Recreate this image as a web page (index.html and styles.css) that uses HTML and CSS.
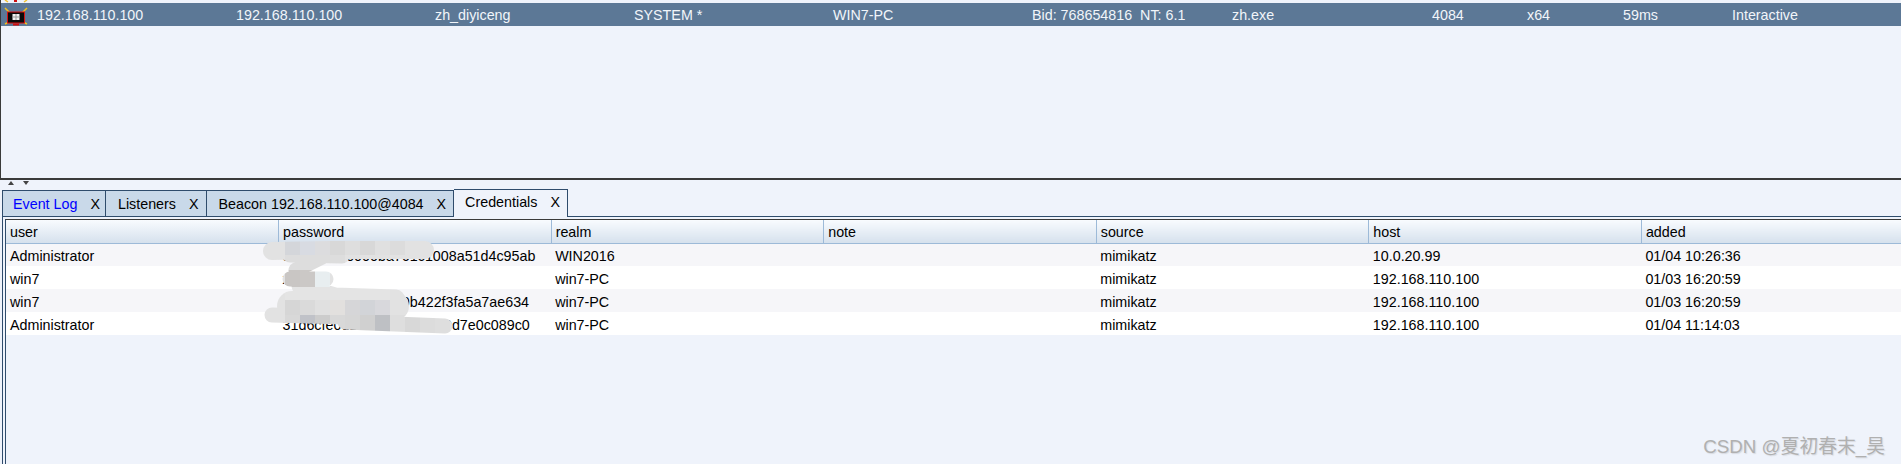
FILE: index.html
```html
<!DOCTYPE html>
<html lang="en">
<head>
    <meta charset="UTF-8">
    <title>Cobalt Strike</title>
    <link rel="stylesheet" href="styles.css">
</head>
<body>
    <div class="app">
        <div class="sessions">
            <div class="session-row">
                <svg class="session-icon" viewBox="0 0 24 27" width="24" height="27">
                    <path d="M1 0l3 2M23 0l-3 2" stroke="#f2c230" stroke-width="1.5"/>
                    <rect x="10" y="0" width="3" height="2" fill="#d01010"/>
                    <path d="M1 8l5 5M23 8l-5 5M1 24l4-2M23 24l-4-2" stroke="#f0c020" stroke-width="1.5"/>
                    <rect x="3.5" y="12" width="17" height="11" fill="#0a0a0a" stroke="#d81010" stroke-width="1"/>
                    <rect x="8.5" y="14" width="7" height="6" fill="#f2f2f2"/>
                    <path d="M12 14v6M8.5 17h7" stroke="#999" stroke-width="1"/>
                    <rect x="9" y="23.5" width="6" height="2" fill="#d01010"/>
                </svg>
                <span></span>
                <span>192.168.110.100</span>
                <span>192.168.110.100</span>
                <span>zh_diyiceng</span>
                <span>SYSTEM *</span>
                <span>WIN7-PC</span>
                <span>Bid: 768654816  NT: 6.1</span>
                <span>zh.exe</span>
                <span>4084</span>
                <span>x64</span>
                <span>59ms</span>
                <span>Interactive</span>
            </div>
        </div>

        <div class="splitter">
            <div class="split-arrows">
                <span class="arrow-up"></span>
                <span class="arrow-down"></span>
            </div>
            <div class="split-grip"></div>
        </div>

        <div class="tabs">
            <div class="tab tab-event">Event Log<span class="tab-close">X</span></div>
            <div class="tab">Listeners<span class="tab-close">X</span></div>
            <div class="tab">Beacon 192.168.110.100@4084<span class="tab-close">X</span></div>
            <div class="tab tab-active">Credentials<span class="tab-close">X</span></div>
        </div>

        <div class="tab-panel">
            <div class="table-wrap">
                <table class="cred-table">
                    <thead>
                        <tr>
                            <th>user</th>
                            <th>password</th>
                            <th>realm</th>
                            <th>note</th>
                            <th>source</th>
                            <th>host</th>
                            <th>added</th>
                        </tr>
                    </thead>
                    <tbody>
                        <tr>
                            <td>Administrator</td>
                            <td>300000000000ba761c1008a51d4c95ab</td>
                            <td>WIN2016</td>
                            <td></td>
                            <td>mimikatz</td>
                            <td>10.0.20.99</td>
                            <td>01/04 10:26:36</td>
                        </tr>
                        <tr>
                            <td>win7</td>
                            <td>xxxxx</td>
                            <td>win7-PC</td>
                            <td></td>
                            <td>mimikatz</td>
                            <td>192.168.110.100</td>
                            <td>01/03 16:20:59</td>
                        </tr>
                        <tr>
                            <td>win7</td>
                            <td>0000000000000000b422f3fa5a7ae634</td>
                            <td>win7-PC</td>
                            <td></td>
                            <td>mimikatz</td>
                            <td>192.168.110.100</td>
                            <td>01/03 16:20:59</td>
                        </tr>
                        <tr>
                            <td>Administrator</td>
                            <td>31d6cfe0d16ae931b73c59d7e0c089c0</td>
                            <td>win7-PC</td>
                            <td></td>
                            <td>mimikatz</td>
                            <td>192.168.110.100</td>
                            <td>01/04 11:14:03</td>
                        </tr>
                    </tbody>
                </table>
            </div>
        </div>

        <!-- smudge over the password column -->
        <svg class="smudge" width="460" height="340" viewBox="0 0 460 340">
            <defs>
                <mask id="smudge-mask" maskUnits="userSpaceOnUse" x="0" y="0" width="460" height="340">
                    <g fill="none" stroke="#fff" stroke-linecap="round" stroke-linejoin="round">
                        <path d="M272 251L330 250L425 250" stroke-width="18"/>
                        <path d="M290 255L342 256" stroke-width="15"/>
                        <path d="M322 257L296 270L306 279" stroke-width="15"/>
                        <path d="M290 279L326 279" stroke-width="15"/>
                        <path d="M300 286L335 296L396 298" stroke-width="17"/>
                        <path d="M292 306L394 306" stroke-width="30"/>
                        <path d="M272 315L345 317" stroke-width="15"/>
                        <path d="M345 322L445 326" stroke-width="15"/>
                    </g>
                </mask>
            </defs>
            <g mask="url(#smudge-mask)">
                <rect x="260" y="235" width="200" height="105" fill="#e2e2e2"/>
                <rect x="285" y="240" width="15" height="15" fill="#d4d6da"/>
                <rect x="300" y="240" width="15" height="15" fill="#d8dbe2"/>
                <rect x="315" y="240" width="15" height="15" fill="#dcdcde"/>
                <rect x="330" y="240" width="15" height="15" fill="#d8d8d8"/>
                <rect x="345" y="240" width="15" height="15" fill="#dedede"/>
                <rect x="360" y="240" width="15" height="15" fill="#d8d8d8"/>
                <rect x="375" y="240" width="15" height="15" fill="#e0e0e0"/>
                <rect x="390" y="240" width="15" height="15" fill="#dcdcdc"/>
                <rect x="405" y="240" width="30" height="15" fill="#e2e2e2"/>
                <rect x="285" y="255" width="60" height="15" fill="#dddddd"/>
                <rect x="285" y="270" width="15" height="17" fill="#c9c6c4"/>
                <rect x="300" y="270" width="15" height="17" fill="#cbc8c6"/>
                <rect x="315" y="270" width="15" height="17" fill="#e8eef0"/>
                <rect x="285" y="287" width="105" height="13" fill="#e4e4e4"/>
                <rect x="285" y="300" width="15" height="15" fill="#d6d6d6"/>
                <rect x="300" y="300" width="15" height="15" fill="#dadada"/>
                <rect x="315" y="300" width="15" height="15" fill="#e0e0e0"/>
                <rect x="330" y="300" width="15" height="15" fill="#e2e0de"/>
                <rect x="345" y="300" width="15" height="15" fill="#d6d6d8"/>
                <rect x="360" y="300" width="15" height="15" fill="#d2d4d8"/>
                <rect x="375" y="300" width="15" height="15" fill="#d8d8dc"/>
                <rect x="285" y="315" width="15" height="20" fill="#d8d8d8"/>
                <rect x="300" y="315" width="15" height="20" fill="#c0c2c8"/>
                <rect x="315" y="315" width="15" height="20" fill="#cccccc"/>
                <rect x="330" y="315" width="15" height="20" fill="#d8d8d8"/>
                <rect x="345" y="315" width="15" height="20" fill="#d6d6d6"/>
                <rect x="360" y="315" width="15" height="20" fill="#d0d0d0"/>
                <rect x="375" y="315" width="15" height="20" fill="#bec0c4"/>
                <rect x="390" y="315" width="15" height="20" fill="#dedede"/>
                <rect x="405" y="315" width="15" height="20" fill="#d8d8d8"/>
                <rect x="420" y="315" width="15" height="20" fill="#dcdcdc"/>
                <rect x="435" y="315" width="15" height="20" fill="#dedede"/>
            </g>
        </svg>

        <div class="watermark">CSDN @夏初春末_昊</div>
    </div>
</body>
</html>
```

FILE: styles.css
```css
:root {
    --bg-color: #eff3fb;
    --dark-line: #3a3a3a;
    --blue-line: #2f4c6c;
    --head-line: #9dbad8;
    --selected: #5c7896;
    --tab-color: #c9d9e9;
}

* {
    box-sizing: border-box;
}

html, body {
    margin: 0;
    padding: 0;
    height: 100%;
    overflow: hidden;
}

body {
    font-family: "Liberation Sans", Arial, sans-serif;
    font-size: 14.3px;
    background-color: var(--bg-color);
    color: #000;
}

.app {
    position: relative;
    height: 464px;
    display: flex;
    flex-direction: column;
}

/* top session table */
.sessions {
    height: 180px;
    padding-top: 3px;
    border-left: 1px solid var(--dark-line);
    border-bottom: 2px solid var(--dark-line);
}

.session-row {
    position: relative;
    height: 23px;
    display: grid;
    grid-template-columns: 36px 199px 199px 199px 199px 199px 200px 200px 95px 96px 109px 1fr;
    align-items: center;
    background-color: var(--selected);
    color: #f1f5fa;
    white-space: pre;
}

.session-icon {
    position: absolute;
    left: 3px;
    top: -3px;
}

/* splitter between the two panes */
.splitter {
    position: relative;
    height: 9px;
    flex-shrink: 0;
}

.split-arrows {
    display: flex;
    gap: 9px;
    padding: 1px 0 0 8px;
}

.arrow-up, .arrow-down {
    width: 0;
    height: 0;
    border-left: 3.5px solid transparent;
    border-right: 3.5px solid transparent;
}

.arrow-up {
    border-bottom: 4px solid #444;
}

.arrow-down {
    border-top: 4px solid #444;
}

.split-grip {
    position: absolute;
    left: 951px;
    top: 1px;
    width: 20px;
    height: 4px;
    background-image: radial-gradient(#7a8a9c 0.8px, transparent 1px);
    background-size: 4px 2px;
}

/* tab strip */
.tabs {
    display: flex;
    align-items: flex-end;
    height: 27px;
    padding-left: 2px;
    flex-shrink: 0;
}

.tab {
    height: 26px;
    display: flex;
    align-items: center;
    padding: 0 7px 0 12px;
    background-color: var(--tab-color);
    border: 1px solid var(--blue-line);
    border-bottom: none;
    border-left-width: 0;
    white-space: nowrap;
}

.tab-event {
    color: #0000ff;
    padding: 0 5px 0 10px;
    border-left-width: 1px;
}

.tab-active {
    position: relative;
    z-index: 1;
    height: 28px;
    margin-bottom: -1px;
    padding: 0 7px 3px 11px;
    background-color: var(--bg-color);
    color: #000;
}

.tab-close {
    margin-left: 13px;
    color: #000;
}

/* credentials table */
.tab-panel {
    flex: 1;
    margin-left: 2px;
    padding: 2px 0 0 2px;
    border-top: 1px solid var(--blue-line);
    border-left: 1px solid var(--blue-line);
    min-height: 0;
}

.table-wrap {
    height: 100%;
    overflow: hidden;
    border-top: 1px solid var(--dark-line);
    border-left: 1px solid var(--blue-line);
}

.cred-table {
    width: 1908px;
    table-layout: fixed;
    border-collapse: collapse;
}

.cred-table th {
    height: 23px;
    padding: 1px 4px 0;
    font-weight: normal;
    text-align: left;
    background: linear-gradient(#f8fbfe, #d6e1ed);
    border-left: 1px solid var(--head-line);
    border-bottom: 1px solid var(--head-line);
}

.cred-table th:first-child {
    border-left: none;
}

.cred-table td {
    height: 23px;
    padding: 2px 4px 0;
    white-space: nowrap;
    overflow: hidden;
}

.cred-table tbody tr:nth-child(odd) {
    background-color: #f6f6f9;
}

.cred-table tbody tr:nth-child(even) {
    background-color: #ffffff;
}

.smudge {
    position: absolute;
    left: 0;
    top: 0;
    pointer-events: none;
}

.watermark {
    position: absolute;
    right: 16px;
    top: 431px;
    font-family: "Liberation Sans", "Noto Sans CJK SC", sans-serif;
    font-size: 18.8px;
    color: #b0b0b0;
    text-shadow: 1px 1px 1px #8e8e8e40;
}
```
